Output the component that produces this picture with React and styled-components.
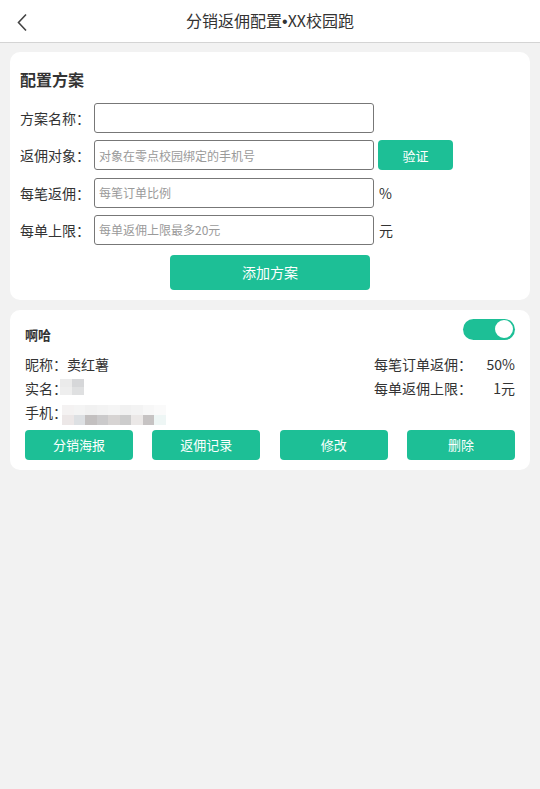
import React from "react";
import styled, { createGlobalStyle } from "styled-components";

const GREEN = "#1dbf96";

const Global = createGlobalStyle`
  html, body { margin: 0; padding: 0; background: #f2f2f2; }
  body { font-family: "Noto Sans CJK SC", "Noto Sans", sans-serif; color: #333; }
  * { box-sizing: border-box; }
`;

const Page = styled.div`
  width: 540px;
  min-height: 789px;
  background: #f2f2f2;
`;

const Header = styled.header`
  height: 43px;
  background: #fff;
  border-bottom: 1px solid #d4d4d4;
  display: flex;
  align-items: center;
  justify-content: center;
  position: relative;
`;

const Back = styled.button`
  position: absolute;
  left: 12px;
  top: 11px;
  width: 20px;
  height: 22px;
  border: 0;
  background: none;
  padding: 0;
  display: flex;
  align-items: center;
  justify-content: center;
`;

const Title = styled.h1`
  margin: 0;
  font-size: 16px;
  font-weight: 400;
  color: #333;
  line-height: 20px;
`;

const Dot = styled.span`
  font-family: "Liberation Sans", sans-serif;
`;

const Body = styled.main`
  padding: 9px 10px;
  display: flex;
  flex-direction: column;
  gap: 10px;
`;

const Card = styled.section`
  background: #fff;
  border-radius: 10px;
  padding: ${(p) => p.$pad};
`;

const CardTitle = styled.h2`
  margin: 0 0 12px;
  font-size: 16px;
  font-weight: 700;
  line-height: 24px;
  color: #333;
`;

const Form = styled.div`
  display: flex;
  flex-direction: column;
  gap: 7.33px;
`;

const Row = styled.div`
  display: flex;
  align-items: center;
  height: 30px;
`;

const Label = styled.span`
  width: 74px;
  font-size: 14px;
  color: #333;
  white-space: nowrap;
`;

const Input = styled.input`
  width: 280px;
  height: 30px;
  border: 1px solid #777;
  border-radius: 3px;
  padding: 0 4px;
  font-size: 12px;
  font-family: inherit;
  color: #333;
  outline: none;
  &::placeholder { color: #9a9a9a; }
`;

const Unit = styled.span`
  margin-left: 5px;
  font-size: 14px;
  color: #333;
`;

const GreenButton = styled.button`
  border: 0;
  background: ${GREEN};
  color: #fff;
  font-family: inherit;
  font-size: ${(p) => p.$size || 13}px;
  width: ${(p) => p.$w}px;
  height: ${(p) => p.$h}px;
  border-radius: 4px;
  padding: 0;
  margin-left: ${(p) => p.$ml || 0}px;
`;

const Center = styled.div`
  display: flex;
  justify-content: center;
  margin-top: 10px;
`;

const PlanHead = styled.div`
  display: flex;
  justify-content: space-between;
  align-items: flex-start;
`;

const PlanName = styled.span`
  margin-top: 6px;
  font-size: 13px;
  font-weight: 700;
  line-height: 20px;
`;

const Toggle = styled.div`
  width: 52px;
  height: 21px;
  border-radius: 11px;
  background: ${GREEN};
  display: flex;
  align-items: center;
  justify-content: flex-end;
  padding: 0 2px;
  &::after {
    content: "";
    width: 18px;
    height: 18px;
    border-radius: 50%;
    background: #fff;
  }
`;

const Info = styled.div`
  display: flex;
  justify-content: space-between;
  margin-top: 7px;
`;

const Col = styled.div`
  display: flex;
  flex-direction: column;
`;

const Line = styled.div`
  display: flex;
  align-items: center;
  height: 24px;
  font-size: 14px;
  color: #333;
  white-space: nowrap;
`;

const Value = styled.span`
  width: 43px;
  text-align: right;
`;

const Mosaic = styled.div`
  display: grid;
  grid-template-columns: repeat(${(p) => p.$cols}, ${(p) => p.$cw}px);
  grid-auto-rows: ${(p) => p.$rh}px;
  margin-top: ${(p) => p.$mt || 0}px;
  margin-left: ${(p) => p.$ml || 0}px;
`;

const Cell = styled.span`
  background: ${(p) => p.$c};
`;

const Actions = styled.div`
  display: flex;
  justify-content: space-between;
  margin-top: 6px;
`;

const nameCells = [["#ebebeb", "#d6d7d9"], ["#eeeeee", "#dfe0e1"]];
const phoneCells = [
  ["#f4f2f2", "#f4f4f4", "#f1f1f1", "#f3f3f3", "#f5f5f5", "#f1f1f1", "#f3f3f3", "#f7f7f7", "#fafafa"],
  ["#ece7e7", "#dde0e3", "#c3c0c0", "#cbcacb", "#d7d4d3", "#cccccc", "#ebe8e7", "#c6c3c3", "#eef6f5"],
];

function MosaicBlock({ rows, cw, rh, mt, ml }) {
  return (
    <Mosaic $cols={rows[0].length} $cw={cw} $rh={rh} $mt={mt} $ml={ml}>
      {rows.flat().map((c, i) => (
        <Cell key={i} $c={c} />
      ))}
    </Mosaic>
  );
}

export default function App() {
  return (
    <Page>
      <Global />
      <Header>
        <Back aria-label="返回">
          <svg width="12" height="19" viewBox="0 0 12 19">
            <path d="M10 1.5 L2.5 9.5 L10 17.5" fill="none" stroke="#444" strokeWidth="1.6" />
          </svg>
        </Back>
        <Title>
          分销返佣配置<Dot>•</Dot>XX校园跑
        </Title>
      </Header>
      <Body>
        <Card $pad="15px 10px 10px">
          <CardTitle>配置方案</CardTitle>
          <Form>
            <Row>
              <Label>方案名称：</Label>
              <Input />
            </Row>
            <Row>
              <Label>返佣对象：</Label>
              <Input placeholder="对象在零点校园绑定的手机号" />
              <GreenButton $w={75} $h={30} $ml={4} $size={13}>验证</GreenButton>
            </Row>
            <Row>
              <Label>每笔返佣：</Label>
              <Input placeholder="每笔订单比例" />
              <Unit>%</Unit>
            </Row>
            <Row>
              <Label>每单上限：</Label>
              <Input placeholder="每单返佣上限最多20元" />
              <Unit>元</Unit>
            </Row>
          </Form>
          <Center>
            <GreenButton $w={200} $h={35} $size={14}>添加方案</GreenButton>
          </Center>
        </Card>
        <Card $pad="9px 15px 10px">
          <PlanHead>
            <PlanName>啊哈</PlanName>
            <Toggle />
          </PlanHead>
          <Info>
            <Col>
              <Line>昵称：卖红薯</Line>
              <Line>
                实名：
                <MosaicBlock rows={nameCells} cw={12} rh={8} mt={-2} ml={-7} />
              </Line>
              <Line>
                手机：
                <MosaicBlock rows={phoneCells} cw={11.5} rh={10} mt={6} ml={-5} />
              </Line>
            </Col>
            <Col>
              <Line>
                每笔订单返佣：<Value>50%</Value>
              </Line>
              <Line>
                每单返佣上限：<Value>1元</Value>
              </Line>
            </Col>
          </Info>
          <Actions>
            <GreenButton $w={108} $h={30}>分销海报</GreenButton>
            <GreenButton $w={108} $h={30}>返佣记录</GreenButton>
            <GreenButton $w={108} $h={30}>修改</GreenButton>
            <GreenButton $w={108} $h={30}>删除</GreenButton>
          </Actions>
        </Card>
      </Body>
    </Page>
  );
}
